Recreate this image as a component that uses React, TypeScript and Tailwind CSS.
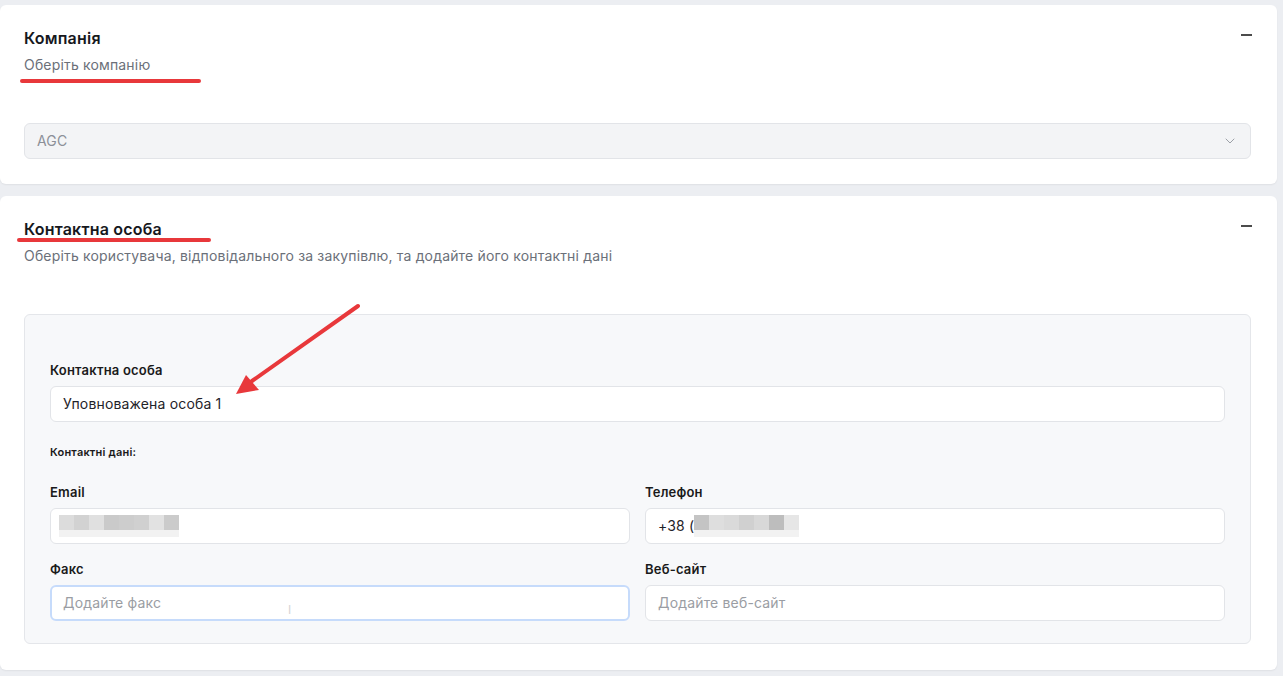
import { ChevronDown } from "lucide-react";

function Minus() {
    return <div className="w-[11px] h-[2px] bg-[#4b4b4b] mt-[6px] mr-[25px]" />;
}

function Field({
    label,
    value,
    placeholder,
    focused,
    children,
}: {
    label: string;
    value?: string;
    placeholder?: string;
    focused?: boolean;
    children?: React.ReactNode;
}) {
    return (
        <div className="flex flex-col">
            <label className="text-[13px] leading-[18px] font-semibold tracking-[0.2px] text-[#1a1a1a]">
                {label}
            </label>
            <div
                className={`mt-[7px] h-[36px] rounded-md bg-white flex items-center px-3 text-sm tracking-[0.17px] ${
                    focused
                        ? "border-2 border-[#c6dbfb] px-[11px]"
                        : "border border-[#e2e4e8]"
                }`}
            >
                {value && <span className="text-[#1f2329]">{value}</span>}
                {children}
                {placeholder && (
                    <span className="text-[#9a9da3]">{placeholder}</span>
                )}
            </div>
        </div>
    );
}

function Blur({ shades }: { shades: string[] }) {
    return (
        <div className="flex">
            {shades.map((c, i) => (
                <div key={i} className="flex flex-col">
                    <div className="w-[15px] h-[15px]" style={{ background: c }} />
                    <div className="w-[15px] h-[7px] bg-[#f2f2f2]" />
                </div>
            ))}
        </div>
    );
}

export default function App() {
    return (
        <div
            className="relative w-[1283px] h-[676px] overflow-hidden bg-[#eceef2] pt-[5px] pr-[6px]"
            style={{ fontFamily: "Inter, 'Noto Sans', sans-serif" }}
        >
            {/* Компанія */}
            <div className="bg-white rounded-md shadow-[0_1px_2px_rgba(0,0,0,0.06)] pt-[23px] pb-[25px] pl-6 pr-[26px]">
                <div className="flex justify-between">
                    <div>
                        <h2 className="text-base leading-5 font-semibold tracking-[0.2px] text-[#16181d]">
                            Компанія
                        </h2>
                        <p className="mt-[7px] text-sm leading-5 tracking-[0.17px] text-[#6b7079]">
                            Оберіть компанію
                        </p>
                    </div>
                    <div className="-mr-[26px]">
                        <Minus />
                    </div>
                </div>
                <div className="mt-[48px] h-[36px] rounded-md border border-[#e2e4e8] bg-[#f3f4f6] flex items-center justify-between pl-3 pr-3">
                    <span className="text-sm tracking-[0.17px] text-[#8c9098]">AGC</span>
                    <ChevronDown className="w-4 h-4 text-[#9ca0a7]" strokeWidth={1.5} />
                </div>
            </div>

            {/* Контактна особа */}
            <div className="mt-[12px] bg-white rounded-md shadow-[0_1px_2px_rgba(0,0,0,0.06)] pt-[23px] pb-[26px] pl-6 pr-[26px]">
                <div className="flex justify-between">
                    <div>
                        <h2 className="text-base leading-5 font-semibold tracking-[0.2px] text-[#16181d]">
                            Контактна особа
                        </h2>
                        <p className="mt-[7px] text-sm leading-5 tracking-[0.17px] text-[#6b7079]">
                            Оберіть користувача, відповідального за закупівлю, та додайте його контактні дані
                        </p>
                    </div>
                    <div className="-mr-[26px]">
                        <Minus />
                    </div>
                </div>

                <div className="mt-[48px] rounded-md border border-[#e4e6ea] bg-[#f7f8fa] px-[25px] pt-[46px] pb-[22px]">
                    <Field label="Контактна особа" value="Уповноважена особа 1" />
                    <p className="mt-[22px] text-[11px] leading-4 font-semibold tracking-[0.2px] text-[#1a1a1a]">
                        Контактні дані:
                    </p>
                    <div className="mt-[23px] grid grid-cols-2 gap-x-[15px] gap-y-4">
                        <Field label="Email">
                            <div className="-ml-1">
                                <Blur shades={["#dcdcdc", "#d2d2d2", "#e0e0e0", "#cacaca", "#cdcdcd", "#d0d0d0", "#e2e2e2", "#cbcbcb"]} />
                            </div>
                        </Field>
                        <Field label="Телефон">
                            <span className="text-[#1f2329]">+38 (</span>
                            <Blur shades={["#c4c4c4", "#dedede", "#dadada", "#d0d0d0", "#d8d8d8", "#bdbdbd", "#e6e6e6"]} />
                        </Field>
                        <Field label="Факс" placeholder="Додайте факс" focused />
                        <Field label="Веб-сайт" placeholder="Додайте веб-сайт" />
                    </div>
                </div>
            </div>

            {/* annotations */}
            <svg
                className="absolute inset-0 pointer-events-none"
                width="1283"
                height="676"
                viewBox="0 0 1283 676"
            >
                <line x1="22" y1="81" x2="199" y2="81" stroke="#e8383b" strokeWidth="4" strokeLinecap="round" />
                <line x1="19" y1="240" x2="209" y2="240" stroke="#e8383b" strokeWidth="4" strokeLinecap="round" />
                <line x1="358" y1="306" x2="252" y2="381" stroke="#e8383b" strokeWidth="4" strokeLinecap="round" />
                <polygon points="236,394 246,375 259,390" fill="#e8383b" />
                <text x="288" y="614" fontSize="12" fill="#d5d5d5">I</text>
            </svg>
        </div>
    );
}
